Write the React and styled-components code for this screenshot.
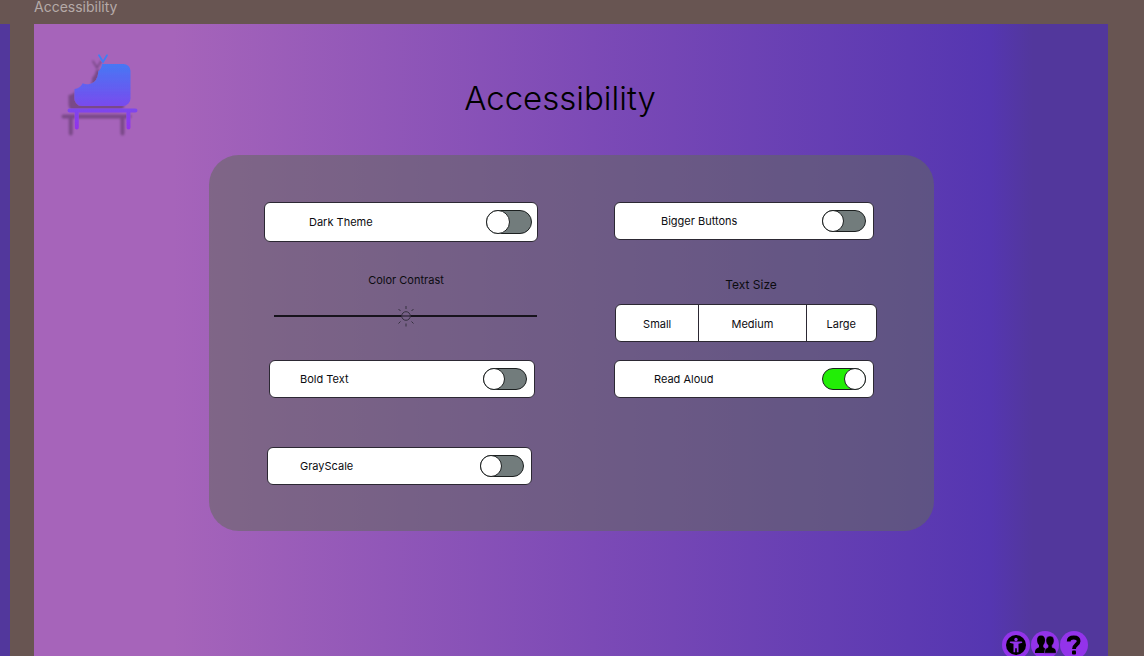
import React, { useState } from "react";
import styled, { createGlobalStyle } from "styled-components";

const GlobalStyle = createGlobalStyle`
  *, *::before { box-sizing: border-box; }
  body {
    margin: 0;
    background: #685552;
    color: #0c0c10;
    font-family: Inter, "Liberation Sans", sans-serif;
    font-size: 11px;
    line-height: 16px;
  }
`;

const Workspace = styled.div`
  display: flex;
  height: 100vh;
  overflow: hidden;
`;

const NeighbourFrame = styled.div`
  flex: 0 0 10px;
  margin-top: 24px;
  background: #52379c;
`;

const FrameColumn = styled.section`
  flex: 1;
  display: flex;
  flex-direction: column;
  margin: 0 36px 0 24px;
`;

const FrameLabel = styled.div`
  flex: 0 0 24px;
  font-size: 14px;
  line-height: 14px;
  color: #b5aaa8;
`;

const Frame = styled.main`
  flex: 1 0 auto;
  display: flex;
  flex-direction: column;
  padding-left: 1px;
  background: linear-gradient(
    90deg,
    #a664ba 0%,
    #a664ba 13%,
    #7c4ab6 52%,
    #5536b1 89%,
    #52379c 93%
  );
`;

const Header = styled.header`
  display: grid;
  grid-template-columns: 1fr auto 1fr;
  align-items: start;
  height: 131px;
  padding: 28px 50px 0 27px;
`;

const Title = styled.h1`
  margin: 26px 0 0;
  font-family: Inter, Lato, sans-serif;
  font-size: 33px;
  font-weight: 300;
  line-height: 40px;
  color: #000;
`;

const Panel = styled.form`
  display: grid;
  grid-template-columns: 274fr 264fr;
  column-gap: 76px;
  align-items: start;
  width: calc(100% - 64px);
  max-width: 725px;
  margin: 0 auto;
  padding: 47px 56px 46px 55px;
  border-radius: 30px;
  background: rgba(98, 106, 93, 0.54);
`;

const Column = styled.div`
  display: flex;
  flex-direction: column;
`;

const ToggleRow = styled.label`
  display: flex;
  align-items: center;
  justify-content: space-between;
  height: ${(p) => (p.$large ? 40 : 38)}px;
  margin: ${(p) => p.$margin || "0"};
  padding: 0 ${(p) => (p.$large ? 5 : 7)}px 0 ${(p) => p.$indent}px;
  border: 1px solid #2c2833;
  border-radius: 6px;
  background: #fff;
`;

const Switch = styled.input`
  appearance: none;
  display: flex;
  width: ${(p) => (p.$large ? 46 : 44)}px;
  height: ${(p) => (p.$large ? 24 : 22)}px;
  margin: 0;
  border: 1px solid #1c2020;
  border-radius: 12px;
  background: #727c7c;

  &::before {
    content: "";
    height: calc(100% + 2px);
    aspect-ratio: 1;
    margin: -1px;
    border: 1px solid #1c2020;
    border-radius: 50%;
    background: #fff;
  }

  &:checked {
    justify-content: flex-end;
    background: #22ee06;
  }
`;

const Caption = styled.label`
  margin-top: ${(p) => p.$top}px;
  padding-left: 10px;
  font-size: ${(p) => p.$size}px;
  text-align: center;
`;

const SliderBox = styled.div`
  position: relative;
  height: 22px;
  margin: 17px 1px 0 10px;
`;

const Slider = styled.input`
  appearance: none;
  display: block;
  width: 100%;
  height: 22px;
  margin: 0;
  background: linear-gradient(#17131c, #17131c) center / 100% 2px no-repeat;

  &::-webkit-slider-thumb {
    appearance: none;
    width: 22px;
    height: 22px;
    background: transparent;
  }
`;

const SunThumb = styled.svg`
  position: absolute;
  top: 0;
  width: 22px;
  height: 22px;
  pointer-events: none;
`;

const Segments = styled.div`
  display: grid;
  grid-template-columns: 83fr 108fr 71fr;
  height: 38px;
  margin: 11px 1px 0;
  border: 1px solid #2c2833;
  border-radius: 6px;
  background: #fff;
  overflow: hidden;
`;

const Segment = styled.button`
  padding: 2px 0 0;
  border: 0;
  background: none;
  color: inherit;
  font: inherit;

  & + & { border-left: 1px solid #2c2833; }
`;

const Shortcuts = styled.nav`
  display: flex;
  justify-content: flex-end;
  gap: 1px;
  margin-top: 100px;
  padding-right: 20px;
`;

const RoundButton = styled.button`
  width: 28px;
  height: 28px;
  padding: 0;
  border: 0;
  border-radius: 50%;
  background: #9333ea;

  svg { display: block; }
`;

function Logo() {
  return (
    <svg width="76" height="86" viewBox="62 52 76 86" overflow="visible" role="img" aria-label="Home">
      <defs>
        <linearGradient id="logoFill" gradientUnits="userSpaceOnUse" x1="0" y1="54" x2="0" y2="128">
          <stop offset="0" stopColor="#3b82f6" />
          <stop offset="1" stopColor="#9333ea" />
        </linearGradient>
        <filter id="logoShadow" filterUnits="userSpaceOnUse" x="50" y="44" width="100" height="100">
          <feDropShadow dx="-6" dy="6" stdDeviation="1" floodColor="#000" floodOpacity="0.27" />
        </filter>
      </defs>
      <g filter="url(#logoShadow)">
        <path
          fill="url(#logoFill)"
          d="M102 64H123.5A7 7 0 0 1 130.5 71V98.5A7.500 7.500 0 0 1 123 106H82A7.500 7.500 0 0 1 74.500 98.500V89Q80 88.500 82.700 83.300Q85 84.400 88.300 84.200Q93 84 96 80Q98.500 76 98.300 71.500Q101.500 69 102 64Z"
        />
        <g fill="none" stroke="url(#logoFill)" strokeLinecap="round">
          <path strokeWidth="1.800" d="M99 55.200L103 62L107 55.200" />
          <path strokeWidth="4" d="M69.500 110.500L135.500 110.600M76.700 111L76.800 127.500M128.400 111L128.500 127.500" />
        </g>
      </g>
    </svg>
  );
}

function AccessibilityIcon() {
  return (
    <svg width="28" height="28" viewBox="0 0 28 28" aria-hidden="true">
      <circle cx="14" cy="14" r="10" fill="#000" />
      <circle cx="14" cy="8.500" r="1.700" fill="#9333ea" />
      <path
        fill="#9333ea"
        d="M8.500 10.500H19.500A.7.700 0 0 1 19.500 12L16.500 12.700V21.300H14.800V17.200H13.200V21.300H11.500V12.700L8.500 12A.7.700 0 0 1 8.500 10.500Z"
      />
    </svg>
  );
}

function PeopleIcon() {
  return (
    <svg width="28" height="28" viewBox="0 0 28 28" aria-hidden="true">
      <path d="M10 4.500C13 4.500 14.200 6.500 14 9.500C13.900 11.500 13.200 13 12.300 14V16.300C14 17.300 15 18 15 22H4C4 18.500 5 17.500 8 16.300V14C7 13 6.200 11.500 6.100 9.500C5.900 6.500 7.200 4.500 10 4.500Z" />
      <path
        stroke="#9333ea"
        strokeWidth="0.600"
        d="M19 5C22.200 5 23.200 7.200 23.100 10C23 12 22 13.300 21.200 14.200V16.300C24 17.300 25.300 18.300 25.300 22.300H13.500C13.500 18.500 14.500 17.300 17 16.300V14.200C16.100 13.300 15 12 14.900 10C14.800 7.200 16 5 19 5Z"
      />
    </svg>
  );
}

function HelpIcon() {
  return (
    <svg width="28" height="28" viewBox="0 0 28 28" aria-hidden="true">
      <path fill="none" stroke="#000" strokeWidth="3.800" d="M8.700 10.500C8.700 7.500 11 6.500 13.800 6.500C17 6.500 18.600 8 18.600 10.200C18.600 13.500 14 13.500 14 18" />
      <rect x="12" y="19.500" width="4" height="4" rx="1" fill="#000" />
    </svg>
  );
}

function ToggleSetting({ label, indent, margin, large, on = false }) {
  return (
    <ToggleRow $indent={indent} $margin={margin} $large={large}>
      {label}
      <Switch type="checkbox" role="switch" defaultChecked={on} $large={large} />
    </ToggleRow>
  );
}

function ContrastSlider() {
  const [value, setValue] = useState(50);
  return (
    <>
      <Caption htmlFor="contrast" $top={30} $size={11}>Color Contrast</Caption>
      <SliderBox>
        <Slider
          id="contrast"
          type="range"
          min="0"
          max="100"
          value={value}
          onChange={(e) => setValue(Number(e.target.value))}
        />
        <SunThumb
          viewBox="0 0 22 22"
          style={{ left: `calc((100% - 22px) * ${value / 100})` }}
          fill="none"
          stroke="#35303f"
          aria-hidden="true"
        >
          <circle cx="11" cy="11" r="4.300" fill="#756088" fillOpacity="0.5" />
          <path d="M11 1V4M11 18.500V21.500M3.500 4L5.500 6M18.500 4L16.500 6M3.500 18.500L5.500 16.500M18.500 18.500L16.500 16.500" />
        </SunThumb>
      </SliderBox>
    </>
  );
}

export default function App() {
  return (
    <>
      <GlobalStyle />
      <Workspace>
        <NeighbourFrame />
        <FrameColumn>
          <FrameLabel>Accessibility</FrameLabel>
          <Frame>
            <Header>
              <Logo />
              <Title>Accessibility</Title>
            </Header>
            <Panel>
              <Column>
                <ToggleSetting label="Dark Theme" indent={44} large />
                <ContrastSlider />
                <ToggleSetting label="Bold Text" indent={30} margin="33px 3px 0 5px" />
                <ToggleSetting label="GrayScale" indent={32} margin="49px 6px 0 3px" />
              </Column>
              <Column>
                <ToggleSetting label="Bigger Buttons" indent={46} margin="0 4px 0 0" />
                <Caption as="div" id="text-size" $top={37} $size={12}>Text Size</Caption>
                <Segments role="group" aria-labelledby="text-size">
                  <Segment type="button">Small</Segment>
                  <Segment type="button">Medium</Segment>
                  <Segment type="button">Large</Segment>
                </Segments>
                <ToggleSetting label="Read Aloud" indent={39} margin="18px 4px 0 0" on />
              </Column>
            </Panel>
            <Shortcuts aria-label="Shortcuts">
              <RoundButton type="button" aria-label="Accessibility"><AccessibilityIcon /></RoundButton>
              <RoundButton type="button" aria-label="Community"><PeopleIcon /></RoundButton>
              <RoundButton type="button" aria-label="Help"><HelpIcon /></RoundButton>
            </Shortcuts>
          </Frame>
        </FrameColumn>
      </Workspace>
    </>
  );
}
